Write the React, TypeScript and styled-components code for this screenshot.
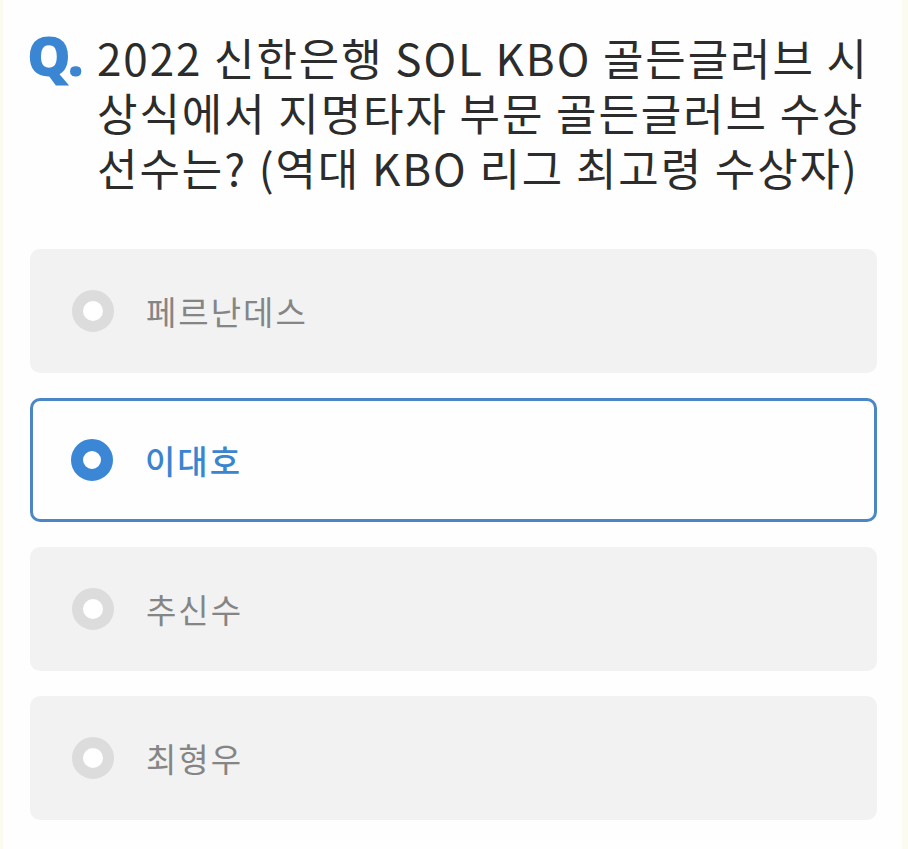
import styled, { createGlobalStyle } from "styled-components";

const GlobalStyle = createGlobalStyle`
    html, body {
        margin: 0;
        padding: 0;
        background: #fbfbef;
    }
`;

const Page = styled.main`
    background: #fefefe;
    margin: 0 6px 0 3px;
    min-height: 849px;
    padding: 27px 25px 0 27px;
    box-sizing: border-box;
    font-family: "Noto Sans CJK KR", "Noto Sans", sans-serif;
`;

const Question = styled.div`
    display: flex;
    flex-flow: row nowrap;
    align-items: baseline;
`;

const QMark = styled.span`
    flex: 0 0 70px;
    margin-left: -3px;
    color: #3a86d2;
    font-family: "Noto Sans", sans-serif;
    font-weight: 900;
    font-size: 55px;
    line-height: 55px;
    letter-spacing: -1px;
`;

const QuestionText = styled.h1`
    margin: 0;
    color: #2c2c2c;
    font-size: 44px;
    font-weight: 400;
    line-height: 55px;
    letter-spacing: 1.9px;
    white-space: nowrap;
`;

const Options = styled.ul`
    list-style: none;
    margin: 54px 0 0;
    padding: 0;
    display: flex;
    flex-flow: column nowrap;
    gap: 25px;
`;

const Option = styled.li<{ $selected?: boolean }>`
    height: 124px;
    box-sizing: border-box;
    border-radius: 10px;
    display: flex;
    align-items: center;
    gap: 32px;
    padding-left: ${(p) => (p.$selected ? "38px" : "42px")};
    background: ${(p) => (p.$selected ? "#fefefe" : "#f2f2f2")};
    border: ${(p) => (p.$selected ? "3px solid #4a87c4" : "none")};
`;

const Radio = styled.span<{ $selected?: boolean }>`
    width: 42px;
    height: 42px;
    border-radius: 50%;
    box-sizing: border-box;
    flex: 0 0 auto;
    background: #ffffff;
    border: ${(p) => (p.$selected ? "12.5px solid #3b87d6" : "11.5px solid #dcdcdc")};
`;

const Label = styled.span<{ $selected?: boolean }>`
    font-size: 33px;
    font-weight: ${(p) => (p.$selected ? 500 : 400)};
    color: ${(p) => (p.$selected ? "#3b84d0" : "#858585")};
    letter-spacing: 2px;
`;

const options = ["페르난데스", "이대호", "추신수", "최형우"];
const selected = 1;

export default function App() {
    return (
        <>
            <GlobalStyle />
            <Page>
                <Question>
                    <QMark>Q.</QMark>
                    <QuestionText>
                        2022 신한은행 SOL KBO 골든글러브 시
                        <br />
                        상식에서 지명타자 부문 골든글러브 수상
                        <br />
                        선수는? (역대 KBO 리그 최고령 수상자)
                    </QuestionText>
                </Question>
                <Options>
                    {options.map((name, i) => (
                        <Option key={name} $selected={i === selected}>
                            <Radio $selected={i === selected} />
                            <Label $selected={i === selected}>{name}</Label>
                        </Option>
                    ))}
                </Options>
            </Page>
        </>
    );
}
